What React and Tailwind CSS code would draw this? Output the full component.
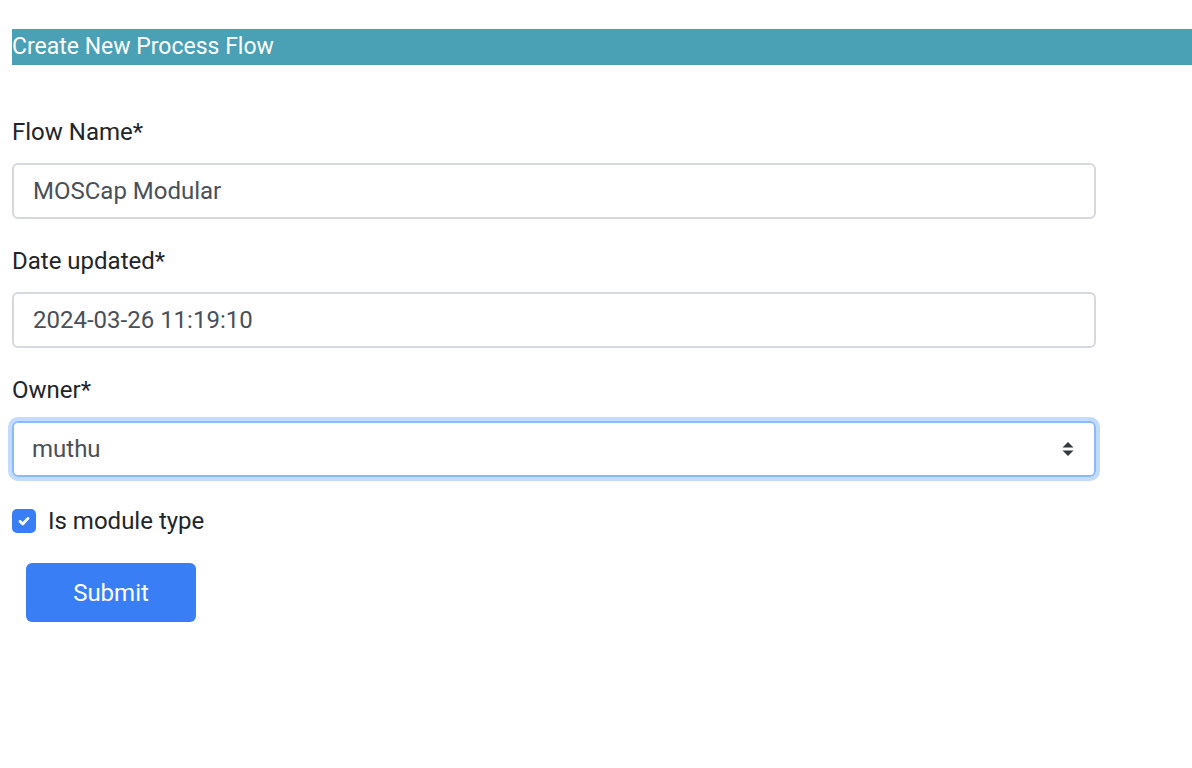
import React from "react";

function Field({ label, children }) {
  return (
    <div className="mb-6">
      <label className="block text-[24px] leading-9 text-[#212529] mb-[13px]">{label}</label>
      {children}
    </div>
  );
}

export default function App() {
  return (
    <div className="min-h-screen bg-white pt-[29px] pl-3 font-['Roboto',sans-serif]">
      <div className="h-9 bg-[#4aa0b5] text-white text-[23px] leading-9 whitespace-nowrap">Create New Process Flow</div>

      <form className="w-[1084px] mt-[49px]" onSubmit={e => e.preventDefault()}>
        <Field label="Flow Name*">
          <input
            defaultValue="MOSCap Modular"
            className="block w-full h-14 px-[19px] border-2 border-[#d5d8dc] rounded-md text-[24px] text-[#495057] outline-none"
          />
        </Field>
        <Field label="Date updated*">
          <input
            defaultValue="2024-03-26 11:19:10"
            className="block w-full h-14 px-[19px] border-2 border-[#d5d8dc] rounded-md text-[24px] text-[#495057] outline-none"
          />
        </Field>
        <Field label="Owner*">
          <div className="relative h-14 rounded-md border-2 border-[#8bb9fb] shadow-[0_0_0_4px_rgba(13,110,253,0.25)]">
            <select
              defaultValue="muthu"
              className="appearance-none block w-full h-full px-[18px] bg-transparent text-[24px] text-[#495057] outline-none"
            >
              <option value="muthu">muthu</option>
            </select>
            <svg className="absolute right-[20px] top-1/2 -translate-y-1/2 pointer-events-none" width="12" height="16" viewBox="0 0 12 16">
              <path d="M6 1 L11.5 6.5 H0.5 Z" fill="#343a40" />
              <path d="M6 15 L11.5 9.5 H0.5 Z" fill="#343a40" />
            </svg>
          </div>
        </Field>

        <div className="flex items-center h-9 mt-[26px] gap-3 text-[24px] text-[#212529]">
          <span className="w-6 h-6 rounded-[5px] bg-[#3a7ef6] flex items-center justify-center">
            <svg width="14" height="14" viewBox="0 0 14 14">
              <path d="M3 7.4 L5.8 10 L11 4.4" fill="none" stroke="white" strokeWidth="2.8" strokeLinecap="round" strokeLinejoin="round" />
            </svg>
          </span>
          <span>Is module type</span>
        </div>

        <button type="submit" className="mt-6 ml-[14px] w-[170px] h-[59px] rounded-md bg-[#3a7ef6] text-white text-[24px]">
          Submit
        </button>
      </form>
    </div>
  );
}
